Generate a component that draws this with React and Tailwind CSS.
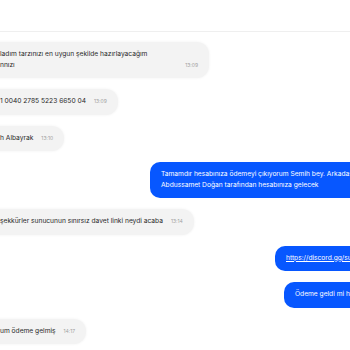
import React from "react";

function Received({ lines, time, w }) {
  return (
    <div className="flex -ml-[12px]">
      <div className={`rounded-[12px] bg-[#f3f3f3] shadow-[0_0_3px_rgba(0,0,0,0.06)] pl-[12px] pr-[11px] text-[#2a2a2a] ${lines.length > 1 ? "py-[7px]" : "py-[7.25px]"} ${w || ""}`}>
        {lines.length > 1 ? (
          <div>
            <div className="leading-[11px] whitespace-nowrap">{lines[0]}</div>
            <div className="flex items-end justify-between leading-[11px]">
              <span className="whitespace-nowrap">{lines[1]}</span>
              <span className="text-[5px] text-[#a0a0a0] leading-[11px]">{time}</span>
            </div>
          </div>
        ) : (
          <div className="flex items-center gap-[8px] leading-[11px]">
            <span className="whitespace-nowrap">{lines[0]}</span>
            <span className="text-[5px] text-[#a0a0a0]">{time}</span>
          </div>
        )}
      </div>
    </div>
  );
}

function Sent({ children, left, double }) {
  return (
    <div className={`flex ${left}`}>
      <div className={`rounded-[10px] bg-[#0757ff] text-white pl-[11px] pr-[40px] leading-[11px] whitespace-nowrap shrink-0 ${double ? "py-[7px]" : "py-[7.25px]"}`}>
        {children}
      </div>
    </div>
  );
}

export default function App() {
  return (
    <div
      className="w-[350px] h-[350px] overflow-hidden bg-white text-[6.65px]"
      style={{ fontFamily: "Inter, 'Noto Sans', sans-serif" }}
    >
      <div className="h-[32px] border-b border-[#efefef] bg-white" />
      <div className="flex flex-col gap-[11px] pt-[10px]">
        <Received
          lines={["ladım tarzınızı en uygun şekilde hazırlayacağım", "nnızı"]}
          time="13:09"
          w="w-[221px]"
        />
        <Received lines={["1 0040 2785 5223 6650 04"]} time="13:09" />
        <Received lines={["h Albayrak"]} time="13:10" />
        <Sent left="pl-[150px]" double>
          <div>Tamamdır hesabınıza ödemeyi çıkıyorum Semih bey. Arkadaşım</div>
          <div>Abdussamet Doğan tarafından hesabınıza gelecek</div>
        </Sent>
        <Received
          lines={["şekkürler sunucunun sınırsız davet linki neydi acaba"]}
          time="13:14"
        />
        <Sent left="pl-[275px]">
          <span className="underline">https://discord.gg/sunucu</span>
        </Sent>
        <Sent left="pl-[284px]">
          <span>Ödeme geldi mi hocam</span>
        </Sent>
        <Received lines={["um ödeme gelmiş"]} time="14:17" />
      </div>
    </div>
  );
}
